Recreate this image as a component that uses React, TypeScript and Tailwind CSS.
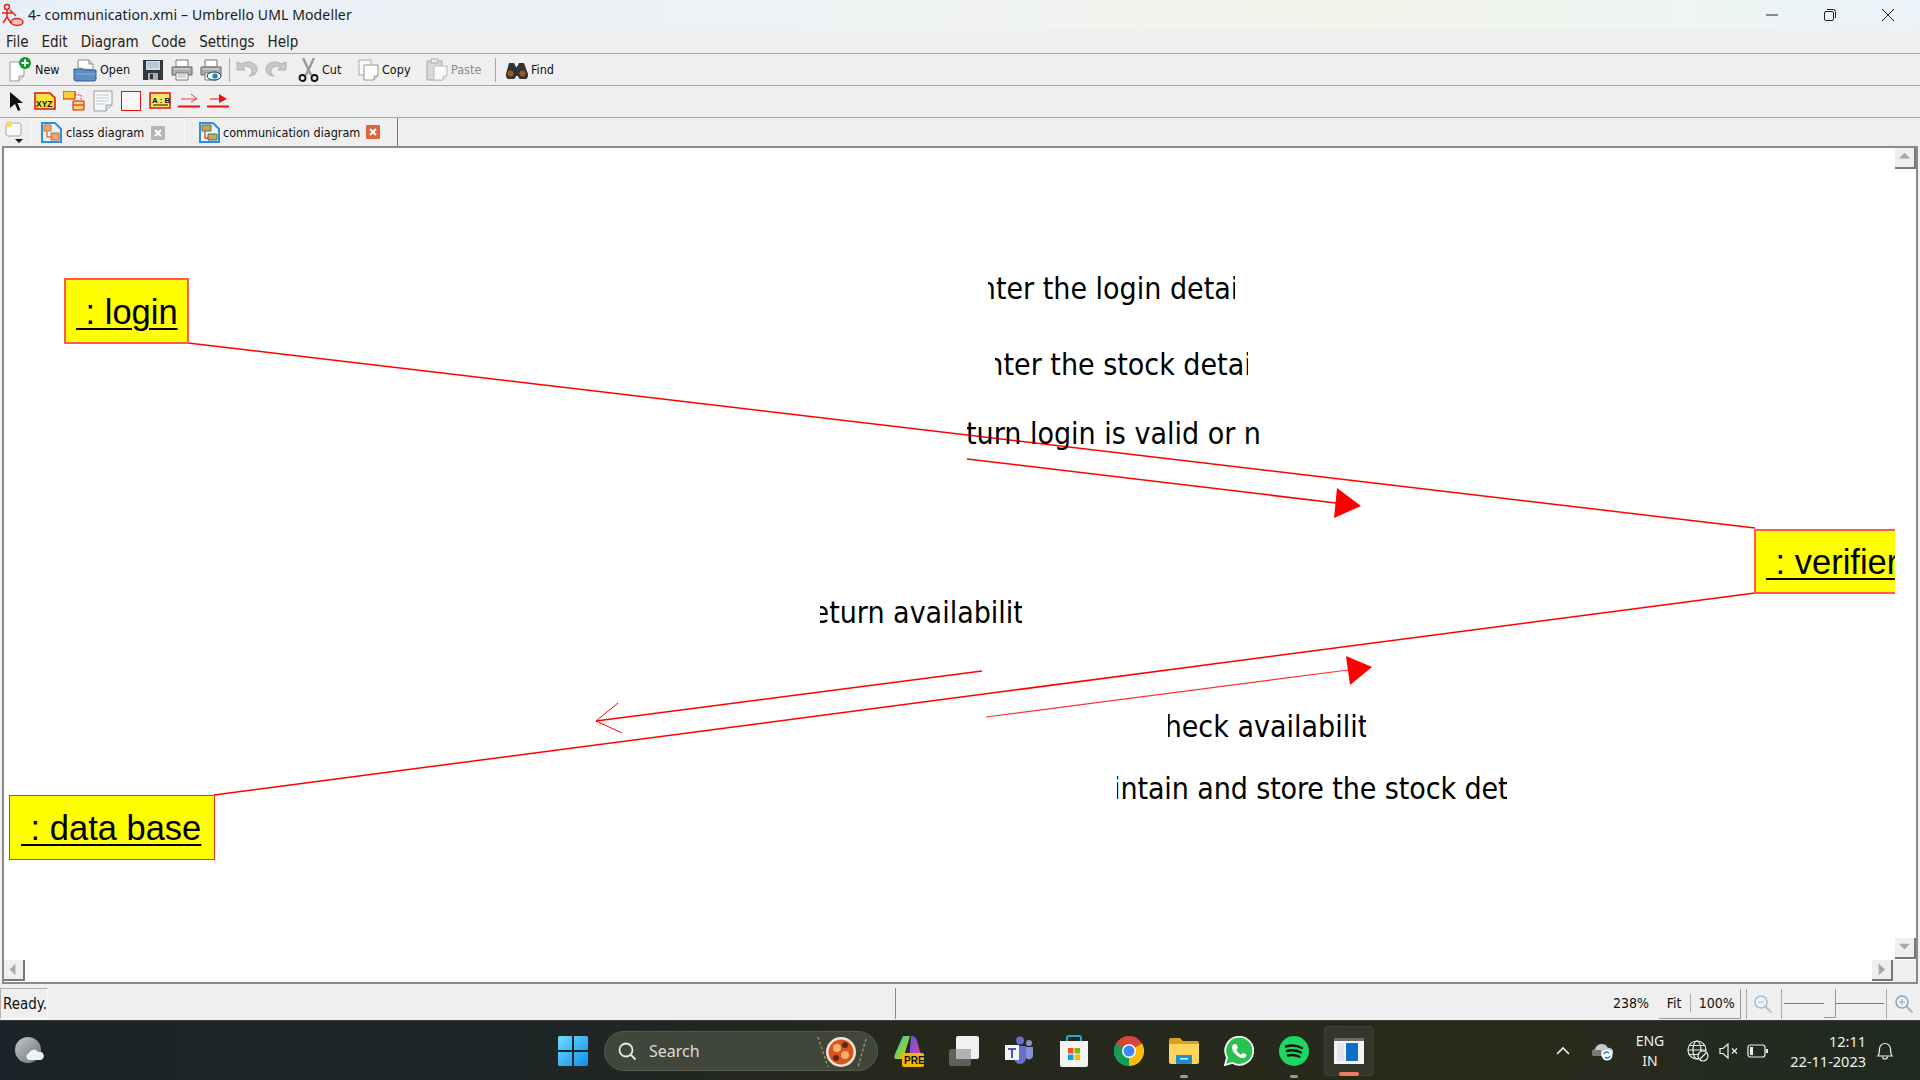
import React from "react";

const ui = "font-['DejaVu_Sans_Condensed','Noto_Sans',sans-serif]";

function DocNew() {
  return (
    <svg width="24" height="26" viewBox="0 0 24 26">
      <path d="M2 5h14v14l-5 5H2z" fill="#fff" stroke="#999" />
      <path d="M11 24v-5h5" fill="#ddd" stroke="#999" />
      <circle cx="17" cy="6" r="6" fill="#0a9a2a" />
      <path d="M17 2.5v7M13.5 6h7" stroke="#fff" strokeWidth="2" />
    </svg>
  );
}
function Open() {
  return (
    <svg width="24" height="24" viewBox="0 0 24 24">
      <path d="M5 10V2h11l4 4v6z" fill="#fff" stroke="#8a8a8a" />
      <path d="M16 2v4h4" fill="#ddd" stroke="#8a8a8a" />
      <path d="M1 11h7l2 1h13v9a2 2 0 0 1-2 2H3a2 2 0 0 1-2-2z" fill="#5b8fc4" stroke="#2e5f96" />
      <path d="M2 16h20" stroke="#87b0da" />
    </svg>
  );
}
function Save() {
  return (
    <svg width="20" height="20" viewBox="0 0 20 20">
      <path d="M0 0h20v20H0z" fill="#33383e" />
      <path d="M3 1h14v9H3z" fill="#cfdbe8" />
      <path d="M4 3h12M4 5h12M4 7h12" stroke="#9fb3c8" />
      <path d="M5 13h10v7H5z" fill="#aab0b6" />
      <path d="M7 14h3v5H7z" fill="#33383e" />
    </svg>
  );
}
function Printer({ eye }: { eye?: boolean }) {
  return (
    <svg width="22" height="22" viewBox="0 0 22 22">
      <path d="M5 1h12v7H5z" fill="#fff" stroke="#777" />
      <path d="M1 8h20v8H1z" fill="#a9adb1" stroke="#666" />
      <path d="M3 10h16" stroke="#e0e0e0" />
      <path d="M5 14h12v7H5z" fill="#fff" stroke="#777" />
      <path d="M7 16h8M7 18h8" stroke="#aaa" />
      {eye && (
        <>
          <ellipse cx="14" cy="17" rx="7" ry="4" fill="#dff" stroke="#333" />
          <circle cx="15" cy="17" r="2.6" fill="#2b78c4" />
        </>
      )}
    </svg>
  );
}
function Undo({ flip }: { flip?: boolean }) {
  return (
    <svg width="22" height="20" viewBox="0 0 22 20" className={flip ? "-scale-x-100" : ""}>
      <path d="M1 2v8h8L6.500 7.500C10 5.500 15 6.500 16 10c.8 3-1 5-3 6 5 0 8-3 8-7C21 3 12-.5 5.500 4z" fill="#c8c8c8" stroke="#b0b0b0" />
    </svg>
  );
}
function Scissors() {
  return (
    <svg width="21" height="24" viewBox="0 0 21 24">
      <path d="M5 0l8 17M16 0L8 17" stroke="#9a9a9a" strokeWidth="2.500" />
      <circle cx="4.500" cy="20" r="3" fill="none" stroke="#111" strokeWidth="1.800" />
      <circle cx="16.500" cy="20" r="3" fill="none" stroke="#111" strokeWidth="1.800" />
    </svg>
  );
}
function Copy() {
  return (
    <svg width="21" height="22" viewBox="0 0 21 22">
      <path d="M1 1h12v15H1z" fill="#f8f8f8" stroke="#aaa" />
      <path d="M6 6h14v11l-4 4H6z" fill="#fff" stroke="#999" />
      <path d="M16 21v-4h4" fill="#ddd" stroke="#999" />
    </svg>
  );
}
function Paste() {
  return (
    <svg width="22" height="24" viewBox="0 0 22 24">
      <path d="M1 3h15v19H1z" fill="#d8d8d8" stroke="#aaa" />
      <path d="M5 1h7v4H5z" fill="#eee" stroke="#aaa" />
      <path d="M8 8h13v10l-4 4H8z" fill="#fafafa" stroke="#bbb" />
      <path d="M17 22v-4h4" fill="#e5e5e5" stroke="#bbb" />
    </svg>
  );
}
function Binoculars() {
  return (
    <svg width="23" height="17" viewBox="0 0 23 17">
      <path d="M4 1h5l2 4h1l2-4h5l4 11a5 5 0 0 1-10 2h-2a5 5 0 0 1-10-2z" fill="#333" />
      <circle cx="5.500" cy="11.500" r="3" fill="#9a5a1a" />
      <circle cx="17.500" cy="11.500" r="3" fill="#9a5a1a" />
    </svg>
  );
}

function TB({ w, children, label, dim }: { w: string; children?: React.ReactNode; label?: string; dim?: boolean }) {
  return (
    <div className={`flex items-center ${w}`}>
      {children}
      {label && <span className={`text-[12.500px] ml-[3px] ${dim ? "text-[#8a8a8a]" : "text-[#111]"}`}>{label}</span>}
    </div>
  );
}

function ClipText({ cls, text }: { cls: string; text: string }) {
  return (
    <div className={`absolute h-[42px] flex items-center justify-center overflow-hidden whitespace-nowrap text-black text-[30px] ${cls}`}>
      <span>{text}</span>
    </div>
  );
}

function ScrollBtn({ dir }: { dir: "up" | "down" | "left" | "right" }) {
  const d = { up: "M4 11l6-6 6 6z", down: "M4 6h12l-6 6z", left: "M12 4v12l-6-6z", right: "M7 4l7 6-7 6z" }[dir];
  return (
    <div className="w-[21px] h-[21px] bg-[#efefef] border-r-2 border-b-2 border-[#777] flex items-center justify-center">
      <svg width="19" height="19" viewBox="0 0 20 20"><path d={d} fill="#a8a8a8" /></svg>
    </div>
  );
}

function TabDiagram({ comm }: { comm?: boolean }) {
  return (
    <svg width="21" height="21" viewBox="0 0 21 21">
      <path d="M1 1h13l6 6v13H1z" fill="#e9f3fb" stroke="#2c8fdc" strokeWidth="2" />
      {comm ? (
        <>
          <path d="M3 3h9v6H3z" fill="#b9a96a" stroke="#6a6a40" />
          <path d="M6 9v7h3" fill="none" stroke="#e05a3a" strokeWidth="1.500" />
          <path d="M9 12h9v6H9z" fill="#b9a96a" stroke="#6a6a40" />
        </>
      ) : (
        <>
          <path d="M3 3h7v6H3z" fill="#f2a46a" stroke="#c0703a" />
          <path d="M6 9v6h4" fill="none" stroke="#e07a4a" strokeWidth="1.500" />
          <path d="M10 11h8v7h-8z" fill="#f2a46a" stroke="#c0703a" />
        </>
      )}
    </svg>
  );
}

function Close({ active }: { active?: boolean }) {
  return (
    <svg width="14" height="14" viewBox="0 0 14 14">
      <rect width="14" height="14" rx="1" fill={active ? "#e2633c" : "#b4b4b4"} />
      <path d="M4 4l6 6M10 4l-6 6" stroke="#fff" strokeWidth="2" />
    </svg>
  );
}

function Dot() {
  return <div className="absolute left-1/2 -translate-x-1/2 top-[49px] w-[8px] h-[3px] rounded-full bg-[#9a9a9a]" />;
}

function TaskIcon({ children, dot, cls }: { children: React.ReactNode; dot?: boolean; cls?: string }) {
  return (
    <div className={`relative w-[55px] h-[50px] flex items-center justify-center ${cls ?? ""}`}>
      {children}
      {dot && <Dot />}
    </div>
  );
}

const boxText = "font-['Liberation_Sans',sans-serif] text-[34.5px] leading-none text-black underline decoration-2 underline-offset-[4px] whitespace-pre pt-[2px]";

export default function App() {
  return (
    <div className={`w-[1920px] h-[1080px] overflow-hidden flex flex-col bg-[#efefef] ${ui}`}>
      {/* title bar */}
      <div className="h-[30px] flex items-center bg-[linear-gradient(90deg,#e9eff7_0%,#edf2f5_40%,#f3f4ea_70%,#eef5f3_88%,#ebf2f9_100%)]">
        <svg width="24" height="24" viewBox="0 0 24 24" className="ml-[1px]">
          <circle cx="6" cy="4" r="2.500" fill="none" stroke="#e2231a" strokeWidth="1.500" />
          <path d="M6 7v7M1 10h10M6 14l-4 6M6 14l4 6M9 7l6 6" stroke="#e2231a" strokeWidth="1.500" fill="none" />
          <ellipse cx="16" cy="19" rx="6" ry="3.500" fill="#f6c5b8" stroke="#e2231a" strokeWidth="1.500" />
        </svg>
        <span className="ml-[3px] mb-[2px] text-[14px] text-[#1a1a1a] font-['Noto_Sans',sans-serif] tracking-[0.13px]">4- communication.xmi – Umbrello UML Modeller</span>
        <div className="ml-auto flex mr-[3px]">
          <div className="w-[58px] h-[30px] flex items-center justify-center">
            <svg width="14" height="14" viewBox="0 0 14 14"><path d="M1 7h12" stroke="#222" /></svg>
          </div>
          <div className="w-[58px] h-[30px] flex items-center justify-center">
            <svg width="14" height="14" viewBox="0 0 14 14" fill="none" stroke="#222"><rect x="1.500" y="3.500" width="9" height="9" rx="1.500" /><path d="M4 1.500h6.500a2 2 0 0 1 2 2V10" /></svg>
          </div>
          <div className="w-[58px] h-[30px] flex items-center justify-center">
            <svg width="14" height="14" viewBox="0 0 14 14"><path d="M1 1l12 12M13 1L1 13" stroke="#222" /></svg>
          </div>
        </div>
      </div>

      {/* menu bar */}
      <div className="h-[24px] shrink-0 flex items-center gap-[13px] pl-[6px] pt-[1px] text-[15px] text-[#222] border-b border-[#a4a4a4]">
        <span>File</span><span>Edit</span><span>Diagram</span><span>Code</span><span>Settings</span><span>Help</span>
      </div>

      {/* main toolbar */}
      <div className="h-[32px] shrink-0 flex items-center pl-[8px] pt-[1px] border-b border-[#a4a4a4]">
        <TB w="w-[65px]" label="New"><DocNew /></TB>
        <TB w="w-[70px]" label="Open"><Open /></TB>
        <TB w="w-[28px]"><Save /></TB>
        <TB w="w-[29px]"><Printer /></TB>
        <TB w="w-[29px]"><Printer eye /></TB>
        <div className="w-[1px] h-[24px] bg-[#a8a8a8] mr-[6px]" />
        <TB w="w-[29px]"><Undo /></TB>
        <TB w="w-[33px]"><Undo flip /></TB>
        <TB w="w-[60px]" label="Cut"><Scissors /></TB>
        <TB w="w-[68px]" label="Copy"><Copy /></TB>
        <TB w="w-[69px]" label="Paste" dim><Paste /></TB>
        <div className="w-[1px] h-[24px] bg-[#a8a8a8] mr-[9px]" />
        <TB w="w-[60px]" label="Find"><Binoculars /></TB>
      </div>

      {/* diagram toolbar */}
      <div className="h-[32px] shrink-0 flex items-center pl-[9px] gap-[7px] border-b border-[#a4a4a4] pb-[2px]">
        <svg width="15" height="20" viewBox="0 0 15 20"><path d="M1 1l13 11H8.500l3 7-2.500 1-3-7L1 17z" fill="#111" /></svg>
        <svg width="22" height="18" viewBox="0 0 22 18" className="ml-[3px]">
          <path d="M1 1h15l5 5v11H1z" fill="#f6e23a" stroke="#e01010" strokeWidth="1.500" />
          <text x="2" y="15" fontSize="8.500" fontWeight="700" fontFamily="Liberation Sans" fill="#111">XYZ</text>
        </svg>
        <svg width="22" height="20" viewBox="0 0 22 20">
          <path d="M0 0h12v8H0z" fill="#f6d23a" stroke="#e01010" />
          <path d="M12 4h6v6" fill="none" stroke="#e01010" strokeDasharray="1.500 1.500" />
          <path d="M10 10h11v9H10z" fill="#f8d868" stroke="#e01010" />
          <path d="M10 14h11" stroke="#e01010" />
        </svg>
        <svg width="20" height="22" viewBox="0 0 20 22" className="ml-[1px]">
          <path d="M1 1h18v14l-6 6H1z" fill="#f8f8f8" stroke="#999" />
          <path d="M13 21v-6h6" fill="#ddd" stroke="#999" />
          <path d="M3 5h13M3 8h13M3 11h13M3 14h9" stroke="#b7cbe0" />
        </svg>
        <div className="w-[20px] h-[20px] border border-[#e01010] bg-[#f8f8f8] ml-[1px]" />
        <svg width="22" height="17" viewBox="0 0 22 17" className="ml-[1px]">
          <path d="M1 1h20v15H1z" fill="#f6e86a" stroke="#e01010" strokeWidth="1.500" />
          <text x="3" y="11" fontSize="8" fontWeight="700" fontFamily="Liberation Sans" fill="#111">A : B</text>
          <path d="M4 13h15" stroke="#111" />
        </svg>
        <svg width="22" height="17" viewBox="0 0 22 17">
          <path d="M3 7h16M13 2l6 5-6 3" fill="none" stroke="#f04040" />
          <path d="M0 14.500h22" stroke="#e81010" strokeWidth="2" />
        </svg>
        <svg width="22" height="17" viewBox="0 0 22 17">
          <path d="M3 7h10" stroke="#e81010" />
          <path d="M12 2l8 5-8 4z" fill="#e81010" />
          <path d="M0 14.500h22" stroke="#e81010" strokeWidth="2" />
        </svg>
      </div>

      {/* tabs */}
      <div className="h-[28px] shrink-0 flex items-center text-[#111] whitespace-nowrap">
        <svg width="20" height="24" viewBox="0 0 20 24" className="ml-[5px]">
          <rect x="1" y="3" width="15" height="13" rx="2" fill="#f8f8f8" stroke="#aaa" />
          <circle cx="4" cy="4" r="3" fill="#f4d860" />
          <path d="M10 19h8l-4 4z" fill="#111" />
        </svg>
        <div className="ml-[5px] w-[155px] h-[26px] flex items-center pl-[10px] border-t border-x border-[#fafafa]">
          <TabDiagram />
          <span className="ml-[4px] w-[85px] mt-[2px] text-[12.500px]">class diagram</span>
          <Close />
        </div>
        <div className="ml-[14px] w-[199px] h-[28px] flex items-center border-r border-[#777]">
          <TabDiagram comm />
          <span className="ml-[3px] w-[143px] mt-[2px] text-[12.500px]">communication diagram</span>
          <Close active />
        </div>
      </div>

      {/* canvas */}
      <div className="h-[838px] shrink-0 pl-[2px] pr-[2px]">
        <div className="h-full flex flex-col bg-white border-l-2 border-t-2 border-r-2 border-b-2 border-[#8a8a8a]">
          <div className="flex-1 min-h-0 flex">
            <div className="relative w-[1891px] h-[812px] overflow-hidden bg-white">
              <svg viewBox="4 148 1891 812" className="absolute inset-0 w-full h-full">
                <path d="M188 343L1755 528" stroke="#ff0000" strokeWidth="1.500" fill="none" />
                <path d="M214 795L1755 593" stroke="#ff0000" strokeWidth="1.500" fill="none" />
                <path d="M967 459L1336 503" stroke="#ff0000" strokeWidth="1.500" fill="none" />
                <path d="M1337 488L1361 506L1334 518z" fill="#ff0000" />
                <path d="M986 717L1348 670" stroke="#ff3030" strokeWidth="1.200" fill="none" />
                <path d="M1346 656L1372 667L1350 685z" fill="#ff0000" />
                <path d="M982 671L596 721" stroke="#ff0000" strokeWidth="1.300" fill="none" />
                <path d="M618 703L596 721L622 733" stroke="#ff0000" strokeWidth="1" fill="none" />
              </svg>

              <div className={`absolute left-[60px] top-[130px] w-[125px] h-[66px] bg-[#ffff00] border-2 border-[#ff5a4a] flex items-center pl-[10px] ${boxText}`}>{" : login"}</div>
              <div className={`absolute left-[1750px] top-[381px] w-[150px] h-[65px] bg-[#ffff00] border-2 border-[#ff5a4a] flex items-center pl-[10px] ${boxText}`}>{" : verifier"}</div>
              <div className={`absolute left-[5px] top-[647px] w-[206px] h-[65px] bg-[#ffff00] border border-[#f03020] flex items-center pl-[11px] ${boxText}`}>{" : data base"}</div>

              <ClipText cls="left-[984px] top-[119px] w-[247px] pr-[1px]" text="enter the login details" />
              <ClipText cls="left-[991px] top-[195px] w-[253px]" text="enter the stock details" />
              <ClipText cls="left-[963px] top-[264px] w-[293px]" text="return login is valid or not" />
              <ClipText cls="left-[816px] top-[443px] w-[202px]" text="return availability" />
              <ClipText cls="left-[1164px] top-[557px] w-[198px]" text="check availability" />
              <ClipText cls="left-[1113px] top-[619px] w-[390px] tracking-[-0.1px]" text="maintain and store the stock details" />
            </div>
            <div className="w-[20px] flex flex-col justify-between pb-[1px]">
              <ScrollBtn dir="up" />
              <ScrollBtn dir="down" />
            </div>
          </div>
          <div className="h-[22px] shrink-0 flex">
            <ScrollBtn dir="left" />
            <div className="flex-1" />
            <ScrollBtn dir="right" />
            <div className="w-[23px] bg-[#efefef]" />
          </div>
        </div>
      </div>

      {/* status bar */}
      <div className="h-[36px] shrink-0 flex items-center relative text-[#111] pt-[3px]">
        <div className="w-[48px] h-[31px] flex items-center pl-[2px] pt-[2px] border-t border-l border-[#b0b0b0] border-r-[#fafafa] border-b-[#fafafa] border-r border-b text-[15px]">Ready.</div>
        <div className="ml-[847px] w-[1px] h-[31px] bg-[#888]" />
        <div className="ml-[717px] text-[14px] w-[46px]">238%</div>
        <div className="w-[83px] h-[30px] flex items-center bg-[#efefef] border-r border-b border-[#999] text-[14px]">
          <span className="ml-[8px] w-[23px]">Fit</span>
          <div className="w-[1px] h-[18px] bg-[#aaa] mr-[8px]" />
          <span>100%</span>
        </div>
        <div className="ml-[5px] w-[33px] h-[30px] flex items-center justify-center border-l border-[#aaa]">
          <svg width="20" height="20" viewBox="0 0 20 20" fill="none"><circle cx="8" cy="8" r="6" stroke="#a8bccf" strokeWidth="1.500" fill="#eef4fa" /><path d="M5 8h6" stroke="#a8bccf" /><path d="M12.500 12.500l6 6" stroke="#c0c0c0" strokeWidth="2" /></svg>
        </div>
        <div className="ml-[2px] w-[106px] h-[30px] relative flex items-center border-l border-[#aaa]">
          <div className="ml-[2px] w-[100px] h-[1px] bg-[#777]" />
          <div className="absolute left-[42px] top-[0px] w-[12px] h-[29px] bg-[#efefef] border-r border-b border-[#999]" />
        </div>
        <div className="w-[34px] h-[30px] flex items-center justify-center border-l border-[#aaa]">
          <svg width="20" height="20" viewBox="0 0 20 20" fill="none"><circle cx="8" cy="8" r="6" stroke="#8aa4bd" strokeWidth="1.500" fill="#eef4fa" /><path d="M5 8h6M8 5v6" stroke="#8aa4bd" /><path d="M12.500 12.500l6 6" stroke="#b0b0b0" strokeWidth="2" /></svg>
        </div>
      </div>

      {/* taskbar */}
      <div className="h-[60px] shrink-0 flex items-center border-t border-[#3a3d38] bg-[linear-gradient(90deg,#1b2428_0%,#1d2527_25%,#26281c_45%,#27291b_70%,#2a2a1c_80%,#1f2a22_100%)] text-white font-['Noto_Sans',sans-serif]">
        <svg width="32" height="32" viewBox="0 0 32 32" className="ml-[13px]">
          <defs>
            <linearGradient id="wx" x1="0" y1="0" x2="1" y2="1"><stop offset="0" stopColor="#c5c9cf" /><stop offset="1" stopColor="#6a7078" /></linearGradient>
          </defs>
          <circle cx="15" cy="15" r="13" fill="url(#wx)" />
          <path d="M15 25a4 4 0 0 1 1-7 5 5 0 0 1 9-1 4 4 0 0 1 3 8z" fill="#f2f2f2" />
        </svg>

        <svg width="30" height="30" viewBox="0 0 30 30" className="ml-[513px]">
          <defs><linearGradient id="win" x1="0" y1="0" x2="1" y2="1"><stop offset="0" stopColor="#6fdcff" /><stop offset="1" stopColor="#0a8fe8" /></linearGradient></defs>
          <path d="M0 1.500A1.500 1.500 0 0 1 1.500 0H14v14H0zM16 0h12.500A1.500 1.500 0 0 1 30 1.500V14H16zM0 16h14v14H1.500A1.500 1.500 0 0 1 0 28.500zM16 16h14v12.500a1.500 1.500 0 0 1-1.500 1.500H16z" fill="url(#win)" />
        </svg>

        <div className="ml-[16px] w-[274px] h-[40px] rounded-full bg-[#41463a] border border-[#565a4e] flex items-center pl-[12px] relative">
          <svg width="20" height="20" viewBox="0 0 20 20" fill="none" stroke="#e8e8e8" strokeWidth="1.800"><circle cx="9" cy="9" r="6.500" /><path d="M14 14l4.500 4.500" /></svg>
          <span className="ml-[12px] text-[16px] text-[#dcdcd8]">Search</span>
          <svg width="56" height="36" viewBox="0 0 56 36" className="absolute right-[7px] top-[1px]">
            <path d="M4 4l10 30M52 6l-8 28" stroke="#8f9266" strokeWidth="1.500" strokeDasharray="3 2" />
            <circle cx="27" cy="19" r="15" fill="#f4e8d8" />
            <circle cx="27" cy="19" r="12.500" fill="#d9531e" />
            <circle cx="23" cy="15" r="4" fill="#f2b36b" />
            <circle cx="31" cy="22" r="4" fill="#f2b36b" />
            <circle cx="31" cy="12" r="3" fill="#5d2a16" />
            <circle cx="22" cy="25" r="3" fill="#5d2a16" />
          </svg>
        </div>

        <div className="ml-[3px] flex items-center h-[50px]">
          <TaskIcon>
            <svg width="30" height="32" viewBox="0 0 30 32">
              <defs>
                <linearGradient id="cp" x1="0" y1="0" x2="1" y2="1"><stop offset="0" stopColor="#2fb8e8" /><stop offset="0.5" stopColor="#7ed04a" /><stop offset="1" stopColor="#f7c21c" /></linearGradient>
                <linearGradient id="cp2" x1="0" y1="0" x2="1" y2="1"><stop offset="0" stopColor="#5a5ae8" /><stop offset="1" stopColor="#e83aa8" /></linearGradient>
              </defs>
              <path d="M9 1h7L9 24H2C0 24 0 22 1 19z" fill="url(#cp)" />
              <path d="M17 1c3 0 5 1 6 5l4 14c0 3-1 4-3 4h-9z" fill="url(#cp2)" />
              <rect x="8" y="18" width="22" height="14" rx="2" fill="#f5b60a" />
              <text x="10" y="29" fontSize="10" fontWeight="700" fontFamily="Liberation Sans" fill="#111">PRE</text>
            </svg>
          </TaskIcon>
          <TaskIcon>
            <svg width="30" height="30" viewBox="0 0 30 30">
              <rect x="0" y="13" width="22" height="17" rx="2" fill="#5f5f5c" />
              <rect x="7" y="0" width="23" height="23" rx="2" fill="#f2f2f2" />
              <rect x="7" y="13" width="15" height="10" fill="#b2b2b0" />
            </svg>
          </TaskIcon>
          <TaskIcon>
            <svg width="28" height="30" viewBox="0 0 28 30">
              <circle cx="15" cy="4.500" r="4" fill="#6b6fc9" />
              <circle cx="24" cy="7" r="3" fill="#8a8fdc" />
              <path d="M9 10h12v12a6 6 0 0 1-12 0z" fill="#6b6fc9" />
              <path d="M21 11h7v9a4 4 0 0 1-7 2z" fill="#8a8fdc" />
              <rect x="0" y="9" width="14" height="15" fill="#f4f4f8" />
              <path d="M3 12h8v2H8v8H6v-8H3z" fill="#4b53bc" />
            </svg>
          </TaskIcon>
          <TaskIcon>
            <svg width="30" height="32" viewBox="0 0 30 32">
              <path d="M8 6V3a2 2 0 0 1 2-2h10a2 2 0 0 1 2 2v3" fill="none" stroke="#22a8e0" strokeWidth="2" />
              <path d="M1 6h28v24a2 2 0 0 1-2 2H3a2 2 0 0 1-2-2z" fill="#f4f4f4" />
              <rect x="9" y="13" width="5.500" height="5.500" fill="#f25022" />
              <rect x="15.500" y="13" width="5.500" height="5.500" fill="#7fba00" />
              <rect x="9" y="19.500" width="5.500" height="5.500" fill="#00a4ef" />
              <rect x="15.500" y="19.500" width="5.500" height="5.500" fill="#ffb900" />
            </svg>
          </TaskIcon>
          <TaskIcon>
            <svg width="30" height="30" viewBox="0 0 30 30">
              <circle cx="15" cy="15" r="15" fill="#db4437" />
              <path d="M15 15L28 7.500A15 15 0 0 1 15 30z" fill="#fbbc05" />
              <path d="M15 15L15 30A15 15 0 0 1 2 7.500z" fill="#0f9d58" />
              <circle cx="15" cy="15" r="7" fill="#fff" />
              <circle cx="15" cy="15" r="5.500" fill="#4285f4" />
            </svg>
          </TaskIcon>
          <TaskIcon dot>
            <svg width="30" height="26" viewBox="0 0 30 26">
              <path d="M0 2a2 2 0 0 1 2-2h9l3 3h14a2 2 0 0 1 2 2v3H0z" fill="#d9a21b" />
              <path d="M0 6h30v18a2 2 0 0 1-2 2H2a2 2 0 0 1-2-2z" fill="#fcd55a" />
              <rect x="7" y="17" width="16" height="9" rx="1" fill="#1a8fd6" />
              <rect x="11" y="20" width="8" height="1.500" fill="#dff" />
            </svg>
          </TaskIcon>
          <TaskIcon>
            <svg width="30" height="30" viewBox="0 0 30 30">
              <path d="M1 29l2-7.500A14 14 0 1 1 8.500 27z" fill="#29c24f" stroke="#fff" strokeWidth="1.800" />
              <path d="M10.500 8c-1 0-2.500 1.500-2.500 3.500 0 4.500 6 10.500 11 10.500 2 0 3.500-1.500 3.500-3 0-.5-3.200-2.200-3.700-2l-1.500 1.800c-2-.7-4-2.700-5-5l1.500-1.500c.3-.5-1-4-2-4z" fill="#fff" />
            </svg>
          </TaskIcon>
          <TaskIcon dot>
            <svg width="30" height="30" viewBox="0 0 30 30">
              <circle cx="15" cy="15" r="15" fill="#1fd660" />
              <path d="M7 10.500c5-1.500 11-1 16 1.500M8 15c4.500-1.200 9.500-.8 14 1.500M9 19.500c4-1 8-.6 11.500 1.200" fill="none" stroke="#141414" strokeWidth="2.400" strokeLinecap="round" />
            </svg>
          </TaskIcon>
          <div className="relative w-[50px] h-[50px] ml-[3px] rounded-[4px] bg-[#34362c] border border-[#3f4136] flex items-center justify-center">
            <svg width="30" height="26" viewBox="0 0 30 26">
              <rect width="30" height="26" fill="#f4f4f4" />
              <rect width="30" height="3" fill="#6a6a6a" />
              <rect x="12" y="5" width="12" height="18" fill="#1070c8" />
              <rect x="3" y="5" width="7" height="18" fill="#dfe6ee" />
            </svg>
            <div className="absolute left-1/2 -translate-x-1/2 top-[45px] w-[20px] h-[4px] rounded-full bg-[#ef7a62]" />
          </div>
        </div>

        {/* tray */}
        <svg width="16" height="10" viewBox="0 0 16 10" className="ml-[181px]"><path d="M2 8l6-6 6 6" fill="none" stroke="#eee" strokeWidth="1.600" /></svg>
        <svg width="22" height="20" viewBox="0 0 22 20" className="ml-[21px]">
          <path d="M3 15a4 4 0 0 1 0-7 7 7 0 0 1 13-1 4 4 0 0 1 2 8z" fill="#c9c9c9" />
          <path d="M1 15a3 3 0 0 1 3-6h5v6z" fill="#777" />
          <circle cx="15" cy="14" r="5.500" fill="#fff" />
          <path d="M12 13a3 3 0 0 1 5-1M18 15a3 3 0 0 1-5 1" fill="none" stroke="#1a78d8" strokeWidth="1.500" />
        </svg>
        <div className="ml-[20px] w-[32px] text-center text-[14px] leading-[20px] text-[#f2f2f2]">ENG<br />IN</div>
        <svg width="22" height="22" viewBox="0 0 22 22" fill="none" stroke="#eee" strokeWidth="1.200" className="ml-[21px]">
          <circle cx="10" cy="10" r="9" /><ellipse cx="10" cy="10" rx="4" ry="9" /><path d="M1 10h18M2 5.500h16M2 14.500h16" />
          <circle cx="16" cy="16" r="5" fill="#27291f" /><path d="M13 19l6-6" />
        </svg>
        <svg width="20" height="16" viewBox="0 0 20 16" fill="none" stroke="#eee" strokeWidth="1.200" className="ml-[10px]">
          <path d="M1 5.500h3L9 1v14l-5-4.500H1z" /><path d="M13 5.500l5 5M18 5.500l-5 5" />
        </svg>
        <svg width="21" height="14" viewBox="0 0 21 14" fill="none" stroke="#eee" strokeWidth="1.200" className="ml-[8px]">
          <rect x="1" y="1" width="17" height="12" rx="2.500" /><rect x="3" y="3" width="3" height="8" fill="#eee" stroke="none" /><path d="M20 5v4" strokeWidth="2" />
        </svg>
        <div className="ml-[2px] w-[96px] text-right text-[14.500px] leading-[20px] text-[#f2f2f2] mt-[1px]">12:11<br />22-11-2023</div>
        <svg width="18" height="20" viewBox="0 0 18 20" fill="none" stroke="#eee" strokeWidth="1.200" className="ml-[10px]">
          <path d="M2 15c1.500-2 1.500-4 1.500-7a5.500 5.500 0 0 1 11 0c0 3 0 5 1.500 7z" /><path d="M6.500 15.500a2.500 2.500 0 0 0 5 0" />
        </svg>
      </div>
    </div>
  );
}
